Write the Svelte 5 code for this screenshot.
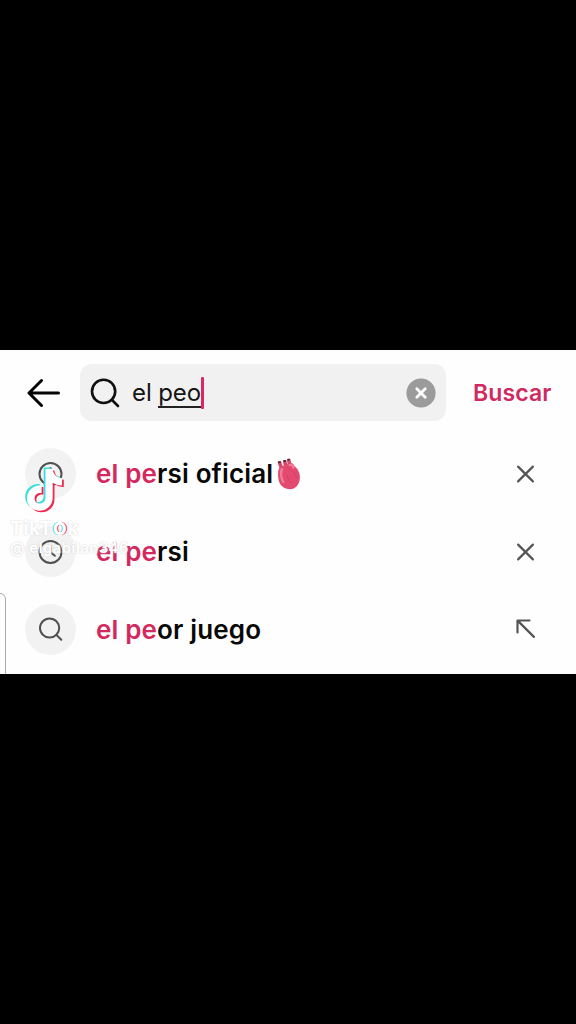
<script>
    let query = $state({ done: 'el ', typing: 'peo' })

    let suggestions = $state([
        { icon: 'clock', match: 'el pe', rest: 'rsi oficial', heart: true, action: 'close' },
        { icon: 'clock', match: 'el pe', rest: 'rsi', heart: false, action: 'close' },
        { icon: 'search', match: 'el pe', rest: 'or juego', heart: false, action: 'fill' }
    ])

    function remove(item) {
        suggestions = suggestions.filter(s => s !== item)
    }

    function act(item) {
        if (item.action === 'close') remove(item)
        else query = { done: '', typing: item.match + item.rest }
    }
</script>

<main>
    <section class="panel">
        <header>
            <button class="back" aria-label="Volver">
                <svg width="34" height="30" viewBox="0 0 34 30">
                    <path d="M14.5 2.5 2 15l12.5 12.5M2.5 15h29" />
                </svg>
            </button>
            <div class="field">
                <svg class="glass" width="30" height="30" viewBox="0 0 30 30">
                    <circle cx="13.6" cy="13.4" r="11.6" />
                    <path d="m22 22 6 6" />
                </svg>
                <span class="query">{query.done}<span class="typing">{query.typing}</span></span>
                <span class="caret"></span>
                <button class="clear" aria-label="Borrar" onclick={() => query = { done: '', typing: '' }}>
                    <svg width="30" height="30" viewBox="0 0 30 30">
                        <circle cx="15" cy="15" r="14.6" />
                        <path d="m10.8 10.8 8.4 8.4m0-8.4-8.4 8.4" />
                    </svg>
                </button>
            </div>
            <button class="submit">Buscar</button>
        </header>

        <ul>
            {#each suggestions as item}
                <li>
                    <span class="bubble">
                        <svg width="26" height="26" viewBox="0 0 26 26">
                            {#if item.icon === 'clock'}
                                <circle cx="12.5" cy="13" r="11" />
                                <path d="M12.5 7v6.2l4.3 3.6" />
                            {:else}
                                <circle cx="11.6" cy="12" r="9.6" />
                                <path d="m18.5 19 4.8 4.8" />
                            {/if}
                        </svg>
                    </span>
                    <span class="label"><b>{item.match}</b>{item.rest}</span>
                    {#if item.heart}
                        <svg class="heart" width="26" height="34" viewBox="0 0 26 34">
                            <path d="M5.5 11 3.6 5.8M10 10 8.8 4.8M14 9 12.8 3.6" stroke="#d4486c" stroke-width="3.6" />
                            <path d="M2.8 5.2h1.4M8 4h1.4M12 2.6h1.4" stroke="#5e2940" stroke-width="1.8" />
                            <path d="M4 10C6 8.5 8.5 9 10.5 7.5 14 5 17.4 5.5 18.3 9c4 3 6.2 8 5.5 13-.7 6-4.7 10.3-9.4 10.3C8 32 3.5 28.5 2.6 22.5 2 18.5 1.4 13 4 10Z" fill="#e34a70" />
                            <path d="M6 12c-1.7 4-.8 9 1.2 13" stroke="#ef7f99" stroke-width="2.4" />
                            <path d="M11 11c5 1.2 8 5 9.5 10M11 19c1 4 3 6 5 7" stroke="#d83f68" stroke-width="1" />
                            <path d="M13.5 8c2.2-.8 3.5.6 3.8 2.8" stroke="#f0809b" stroke-width="2" />
                        </svg>
                    {/if}
                    <button class="action" aria-label={item.action} onclick={() => act(item)}>
                        <svg width="20" height="20" viewBox="0 0 20 20">
                            {#if item.action === 'close'}
                                <path d="m2.1 2.6 14.8 14.8m0-14.8L2.1 17.4" />
                            {:else}
                                <path d="M13.5 1.5h-12v12M1.9 1.9l16 16" />
                            {/if}
                        </svg>
                    </button>
                </li>
            {/each}
        </ul>

        <span class="edge"></span>

        <div class="watermark">
            <svg class="note" width="42" height="48" viewBox="0 0 42 48">
                <defs>
                    <path id="note" d="M20.5 3h7c.7 5.2 4.2 8.8 9.5 9.2v7.3c-3.6 0-6.7-1.1-9.3-3v15c0 8-6 13.2-13 13.2S2 39.2 2 32.2c0-7.7 6.5-13.6 14.6-12.6v7.4c-4-1-7 1.5-7 5.1 0 3.3 2.3 5.4 5.2 5.4 3.4 0 5.7-2.5 5.7-6.3Z" />
                </defs>
                <use href="#note" x="-.8" y="-1.4" fill="#3cdde0" />
                <use href="#note" x="2.8" y="1.6" fill="#ee2850" />
                <use href="#note" x="1" y=".1" fill="#fff" />
            </svg>
            <span class="brand">TikT<i>o</i>k</span>
            <span class="user">@ elgabilan346</span>
        </div>
    </section>
</main>

<style>
:global(body) {
    margin: 0;
    background: #000;
}

main {
    height: 1024px;
    display: flex;
    align-items: center;
    background: #000;
    font-family: Inter, "Liberation Sans", sans-serif;
}

.panel {
    position: relative;
    width: 576px;
    height: 324px;
    background: #fefefe;
    overflow: hidden;
}

button {
    border: 0;
    padding: 0;
    background: none;
    font: inherit;
    display: flex;
}

svg {
    flex: none;
    fill: none;
    stroke-linecap: round;
    stroke-linejoin: round;
}

header {
    height: 57px;
    padding: 14px 20px 13px 27px;
    display: flex;
    align-items: center;
}

.back {
    width: 53px;
    flex: none;
    stroke: #050505;
    stroke-width: 3;
}

.field {
    width: 366px;
    height: 57px;
    padding: 0 10px 0 10px;
    box-sizing: border-box;
    flex: none;
    display: flex;
    align-items: center;
    border-radius: 12px;
    background: #f1f1f1;
}

.glass {
    stroke: #101010;
    stroke-width: 2.6;
}

.query {
    margin-left: 12px;
    font-size: 24px;
    line-height: 30px;
    letter-spacing: -0.1px;
    color: #151515;
    white-space: pre;
}

.typing {
    display: inline-block;
    height: 28px;
    line-height: 30px;
    border-bottom: 2px solid #222;
}

.caret {
    width: 3px;
    height: 32px;
    border-radius: 1px;
    background: #dc2860;
}

.clear {
    margin-left: auto;
    stroke: #fff;
    stroke-width: 2.8;
}

.clear circle {
    fill: #9b9b9b;
    stroke: none;
}

.submit {
    margin-left: 27px;
    color: #cf2a61;
    font-size: 23px;
    font-weight: 600;
    letter-spacing: 0.1px;
}

ul {
    margin: 0;
    padding: 1px 0 0;
    list-style: none;
}

li {
    height: 77.7px;
    padding: 0 40px 0 25px;
    display: flex;
    align-items: center;
}

.bubble {
    width: 51px;
    height: 51px;
    flex: none;
    border-radius: 50%;
    background: #f2f2f2;
    display: flex;
    align-items: center;
    justify-content: center;
    stroke: #505050;
    stroke-width: 2;
}

.label {
    margin-left: 20px;
    font-size: 26px;
    font-weight: 600;
    letter-spacing: 0.15px;
    color: #080808;
    white-space: pre;
}

.label b {
    font-weight: 600;
    color: #d4295f;
}

.heart {
    margin-left: 3px;
}

.action {
    margin-left: auto;
    stroke: #555;
    stroke-width: 2.2;
}

.edge {
    position: absolute;
    left: -8px;
    top: 243px;
    width: 12px;
    height: 90px;
    border: 1px solid #aaa;
    border-radius: 6px;
}

/* watermark floats over the list */
.watermark {
    position: absolute;
    left: 10px;
    top: 116px;
    display: flex;
    flex-direction: column;
    color: #fff;
    font-weight: 600;
    text-shadow: 0 0 2px #ccc;
    white-space: nowrap;
}

.note {
    margin-left: 14px;
    overflow: visible;
}

.brand {
    margin-top: 5px;
    font-size: 19px;
    line-height: 20px;
    font-weight: 700;
    letter-spacing: 0.6px;
}

.brand i {
    font-style: normal;
    font-size: 23px;
    line-height: 10px;
    text-shadow: -1px 0 #3cdde0, 1px 0 #ee2850;
}

.user {
    font-size: 14.5px;
    line-height: 18px;
    letter-spacing: 0.65px;
}
</style>
